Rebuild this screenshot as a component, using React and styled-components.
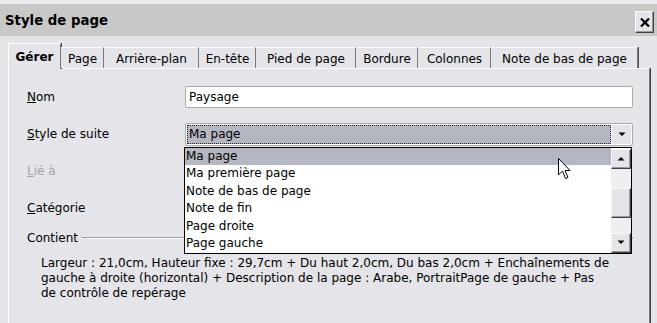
import React from "react";
import styled, { createGlobalStyle } from "styled-components";

const GlobalStyle = createGlobalStyle`
  html, body { margin: 0; padding: 0; background: #e4e4e9; }
  body { font-family: "DejaVu Sans", Verdana, sans-serif; color: #000; }
  * { box-sizing: border-box; }
`;

const Window = styled.div`
  position: relative;
  width: 657px;
  height: 323px;
  overflow: hidden;
  background: #e4e4e9;
`;

const TitleBar = styled.div`
  height: 36px;
  border-top: 4px solid #ececee;
  background: #c8c8c8;
  display: flex;
  align-items: center;
  justify-content: space-between;
  padding: 0 3px 0 5px;
`;

const Title = styled.div`
  font-size: 13.3px;
  font-weight: bold;
`;

const CloseButton = styled.div`
  width: 19px;
  height: 22px;
  margin-top: 4px;
  background: #e4e4e9;
  border-top: 1px solid #fff;
  border-left: 1px solid #fff;
  border-right: 1px solid #404040;
  border-bottom: 1px solid #404040;
  box-shadow: inset -1px -1px 0 #9a9a9a;
  display: flex;
  align-items: center;
  justify-content: center;
`;

const Body = styled.div`
  padding: 7px 7px 0 8px;
`;

const TabRow = styled.div`
  display: flex;
  align-items: flex-end;
  height: 25px;
  position: relative;
  z-index: 1;
`;

const Tab = styled.div`
  width: ${(p) => p.$w}px;
  height: ${(p) => (p.$active ? 26 : 21)}px;
  margin-bottom: ${(p) => (p.$active ? -1 : 0)}px;
  background: #e4e4e9;
  border-top: 1px solid #fff;
  border-left: 1px solid ${(p) => (p.$first || p.$active ? "#fff" : "transparent")};
  border-right: 1px solid #7a7a7e;
  box-shadow: 1px 0 0 #505050;
  display: flex;
  align-items: center;
  justify-content: center;
  padding-top: ${(p) => (p.$active ? 0 : 1)}px;
  font-size: 12px;
  font-weight: ${(p) => (p.$active ? "bold" : "normal")};
  white-space: nowrap;
`;

const Panel = styled.div`
  position: relative;
  width: 642px;
  height: 260px;
  border-top: 1px solid #fff;
  border-left: 1px solid #fff;
  border-right: 1px solid #7a7a7e;
  box-shadow: 1px 0 0 #404040;
  padding: 17px 0 0 18px;
`;

const FormGrid = styled.div`
  display: grid;
  grid-template-columns: 158px 448px;
  grid-auto-rows: 22px;
  row-gap: 15px;
  align-items: center;
`;

const Label = styled.div`
  font-size: 12px;
  color: ${(p) => (p.$disabled ? "#a4a4a8" : "#000")};
  u { text-decoration: underline; }
`;

const TextInput = styled.div`
  height: 22px;
  background: #fff;
  border: 1px solid #a9a9b0;
  border-radius: 2px;
  display: flex;
  align-items: center;
  padding-left: 3px;
  font-size: 12px;
`;

const ComboWrap = styled.div`
  position: relative;
  height: 23px;
`;

const ComboBox = styled.div`
  height: 23px;
  background: #fff;
  border: 1px solid #a9a9b0;
  border-radius: 2px;
  display: flex;
  padding: 1px;
  gap: 1px;
`;

const Selected = styled.div`
  flex: 1;
  background: #b5b7c2;
  border: 1px dotted #202020;
  display: flex;
  align-items: center;
  padding-left: 1px;
  font-size: 12px;
`;

const DropButton = styled.div`
  width: 19px;
  background: #e4e4e9;
  display: flex;
  align-items: center;
  justify-content: center;
`;

const List = styled.div`
  position: absolute;
  left: -1px;
  top: 24px;
  width: 448px;
  background: #fff;
  border: 1px solid #000;
  display: flex;
  z-index: 2;
`;

const Items = styled.div`
  flex: 1;
`;

const Item = styled.div`
  height: 17.5px;
  line-height: 17.5px;
  padding-left: 1px;
  font-size: 12px;
  background: ${(p) => (p.$hl ? "#b5b7c2" : "#fff")};
  white-space: nowrap;
`;

const ScrollBar = styled.div`
  width: 20px;
  background: #efeff2;
  display: flex;
  flex-direction: column;
  justify-content: space-between;
  position: relative;
  margin: 1px 0 0 0;
`;

const ScrollButton = styled.div`
  height: 20px;
  background: #e4e4e9;
  border-top: 1px solid #f6f6f8;
  border-left: 1px solid #f6f6f8;
  border-right: 1px solid #404040;
  border-bottom: 1px solid #404040;
  box-shadow: inset -1px -1px 0 #9a9a9e;
  display: flex;
  align-items: center;
  justify-content: center;
`;

const Thumb = styled.div`
  position: absolute;
  left: 0;
  right: 0;
  top: 39px;
  height: 30px;
  background: #e4e4e9;
  border-top: 1px solid #f6f6f8;
  border-left: 1px solid #f6f6f8;
  border-right: 1px solid #404040;
  border-bottom: 1px solid #404040;
  box-shadow: inset -1px -1px 0 #9a9a9e;
`;

const GroupHeader = styled.div`
  display: flex;
  align-items: center;
  gap: 3px;
  margin-top: 12px;
  width: 606px;
  font-size: 12px;
`;

const GroupLine = styled.div`
  flex: 1;
  height: 2px;
  border-top: 1px solid #a0a0a4;
  border-bottom: 1px solid #fff;
`;

const Description = styled.div`
  margin: 11px 0 0 14px;
  font-size: 12px;
  line-height: 15px;
  white-space: nowrap;
`;

const Cursor = styled.svg`
  position: absolute;
  left: 558px;
  top: 158px;
  z-index: 5;
`;

const Tri = ({ up }) => (
  <svg width="8" height="5" viewBox="0 0 8 5">
    <path d={up ? "M0.5 4.5 L4 1 L7.5 4.5 Z" : "M0.5 0.5 L7.5 0.5 L4 4 Z"} fill="#000" />
  </svg>
);

const tabs = [
  ["Gérer", 53],
  ["Page", 43],
  ["Arrière-plan", 95],
  ["En-tête", 57],
  ["Pied de page", 100],
  ["Bordure", 62],
  ["Colonnes", 73],
  ["Note de bas de page", 147],
];

const items = [
  "Ma page",
  "Ma première page",
  "Note de bas de page",
  "Note de fin",
  "Page droite",
  "Page gauche",
];

export default function App() {
  return (
    <>
      <GlobalStyle />
      <Window>
        <TitleBar>
          <Title>Style de page</Title>
          <CloseButton>
            <svg width="10" height="9" viewBox="0 0 10 9">
              <path d="M1 0.5 L9 8.5 M9 0.5 L1 8.5" stroke="#000" strokeWidth="2.2" />
            </svg>
          </CloseButton>
        </TitleBar>
        <Body>
          <TabRow>
            {tabs.map(([t, w], i) => (
              <Tab key={t} $w={w} $active={i === 0} $first={i === 0}>
                {t}
              </Tab>
            ))}
          </TabRow>
          <Panel>
            <FormGrid>
              <Label><u>N</u>om</Label>
              <TextInput>Paysage</TextInput>
              <Label><u>S</u>tyle de suite</Label>
              <ComboWrap>
                <ComboBox>
                  <Selected>Ma page</Selected>
                  <DropButton><Tri /></DropButton>
                </ComboBox>
                <List>
                  <Items>
                    {items.map((it, i) => (
                      <Item key={it} $hl={i === 0}>{it}</Item>
                    ))}
                  </Items>
                  <ScrollBar>
                    <ScrollButton><Tri up /></ScrollButton>
                    <Thumb />
                    <ScrollButton><Tri /></ScrollButton>
                  </ScrollBar>
                </List>
              </ComboWrap>
              <Label $disabled><u>L</u>ié à</Label>
              <div />
              <Label><u>C</u>atégorie</Label>
              <div />
            </FormGrid>
            <GroupHeader>
              <span>Contient</span>
              <GroupLine />
            </GroupHeader>
            <Description>
              Largeur : 21,0cm, Hauteur fixe : 29,7cm + Du haut 2,0cm, Du bas 2,0cm + Enchaînements de
              <br />
              gauche à droite (horizontal) + Description de la page : Arabe, PortraitPage de gauche + Pas
              <br />
              de contrôle de repérage
            </Description>
          </Panel>
        </Body>
        <Cursor width="13" height="22" viewBox="0 0 13 22">
          <path
            d="M0.5 0.5 L0.5 17 L4.5 13 L7.5 20.5 L10 19.5 L7 12.5 L12 12.5 Z"
            fill="#fff"
            stroke="#000"
            strokeWidth="1"
            strokeLinejoin="miter"
          />
        </Cursor>
      </Window>
    </>
  );
}
